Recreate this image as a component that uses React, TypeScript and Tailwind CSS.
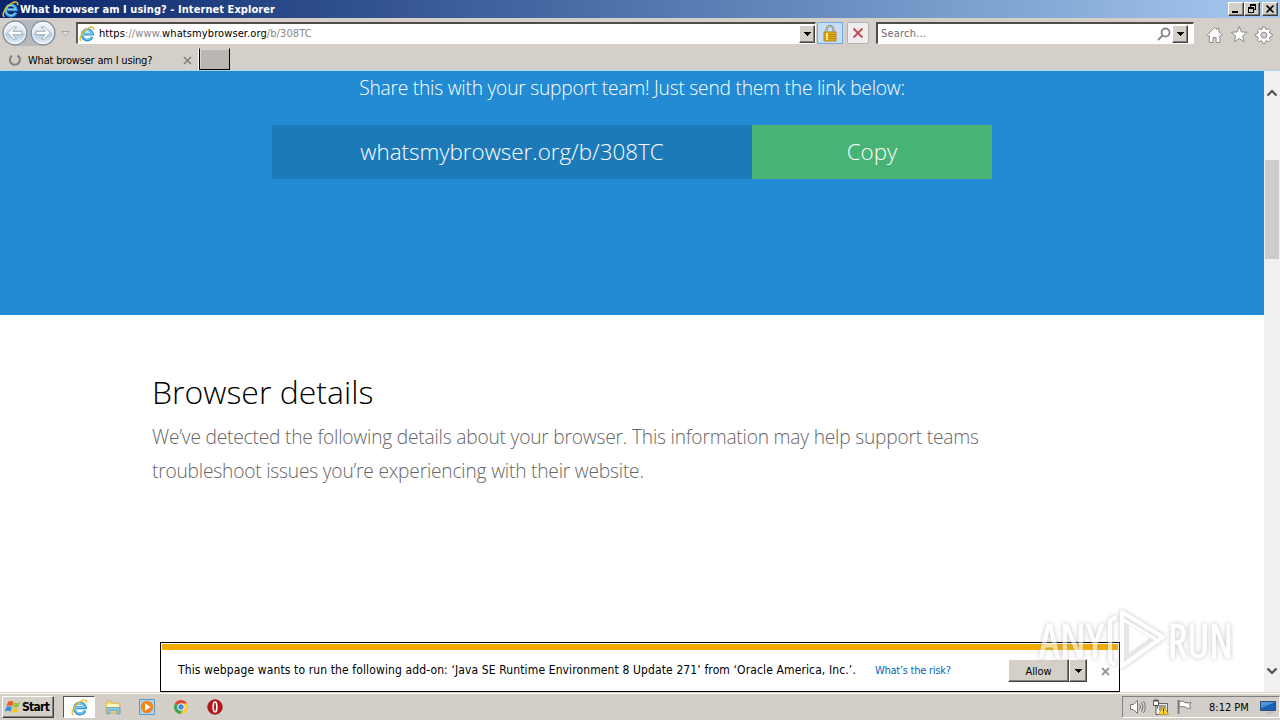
import type { ReactNode } from "react";

function IeLogo({ size = 16, className = "" }: { size?: number; className?: string }) {
  return (
    <svg width={size} height={size} viewBox="0 0 16 16" fill="none" className={`shrink-0 ${className}`}>
      <path d="M13.2 11A5.2 5.2 0 1 1 13.6 8.2H5" stroke="#2f94d2" strokeWidth="2.8" />
      <path d="M12.4 11.2A4.7 4.7 0 1 1 13 7.900H5" stroke="#7ccff3" strokeWidth="1.2" />
      <path d="M2.2 14.9C-.8 13.2 3 5.6 9 2.2c3.4-1.900 6.500-1.800 5.500 1.800" stroke="#f0bf32" strokeWidth="1.400" />
    </svg>
  );
}

function Arrow({ flip = false }: { flip?: boolean }) {
  return (
    <svg width="26" height="26" viewBox="0 0 26 26" className={flip ? "-scale-x-100" : ""}>
      <defs>
        <linearGradient id="orb" x2="0" y2="1">
          <stop stopColor="#f5f8fb" />
          <stop offset=".45" stopColor="#dce6ef" />
          <stop offset=".55" stopColor="#b5cbdc" />
          <stop offset="1" stopColor="#e8f5fc" />
        </linearGradient>
      </defs>
      <circle cx="13" cy="13" r="11.8" fill="url(#orb)" stroke="#81909e" strokeWidth="1.2" />
      <circle cx="13" cy="13" r="10.4" fill="none" stroke="#fff" opacity=".8" />
      <path d="M5.5 13l6.3-6h3l-4.2 4.3H20v3.4h-9.4l4.2 4.3h-3z" fill="#fff" stroke="#8c9eaf" strokeWidth=".8" />
    </svg>
  );
}

function Caret() {
  return (
    <svg width="8" height="4" viewBox="0 0 8 4" shapeRendering="crispEdges">
      <path d="M0 0h8L4 4z" fill="#000" />
    </svg>
  );
}

function Raised({ className, children }: { className: string; children: ReactNode }) {
  return (
    <div
      className={`flex shrink-0 items-center justify-center border border-t-white border-l-white border-r-[#404040] border-b-[#404040] bg-[#d4d0c8] shadow-[inset_-1px_-1px_0_#808080] ${className}`}
    >
      {children}
    </div>
  );
}

function TitleBar() {
  return (
    <div className="flex h-[18px] items-center bg-linear-to-r from-[#0a246a] to-[#a6caf0] pr-[2px] pl-[2px]">
      <IeLogo size={17} />
      <span className="ml-px flex-1 pt-[2px] text-[11px] font-bold tracking-[0.06px] text-white">
        What browser am I using? - Internet Explorer
      </span>
      <Raised className="h-[14px] w-4">
        <svg width="12" height="10" shapeRendering="crispEdges"><path d="M2 7h6v2H2z" /></svg>
      </Raised>
      <Raised className="h-[14px] w-4">
        <svg width="12" height="10" shapeRendering="crispEdges">
          <path d="M4 0h6v6H8V5h1V2H5v1H4zM2 3h6v6H2zM3 5v3h4V5z" fillRule="evenodd" />
        </svg>
      </Raised>
      <Raised className="ml-[2px] h-[14px] w-4">
        <svg width="12" height="10"><path d="M2.5 1.5l7 7m0-7l-7 7" stroke="#000" strokeWidth="1.7" /></svg>
      </Raised>
    </div>
  );
}

function NavBar() {
  return (
    <div className="flex h-[30px] items-start pt-[4px] pl-[2px]">
      <div className="-mt-[2px] flex h-[26px] w-[54px] shrink-0 items-center justify-between rounded-[13px] bg-[#b6b9bb]">
        <Arrow />
        <Arrow flip />
      </div>
      <svg width="9" height="6" className="mt-[9px] ml-[5px] shrink-0">
        <path d="M.5.5h8l-4 4z" fill="#e7e4df" stroke="#aaa6a2" />
      </svg>
      <div className="ml-[6px] flex h-[22px] w-[740px] shrink-0 items-center border border-t-2 border-l-2 border-t-[#504c49] border-l-[#605c58] border-r-white border-b-white bg-white pl-px">
        <IeLogo />
        <span className="ml-[4px] flex-1 pt-[2px] text-[11px] tracking-[0.1px] whitespace-nowrap text-[#878787]">
          <span className="text-black">https</span>://www.<span className="text-black">whatsmybrowser.org</span>/b/308TC
        </span>
        <Raised className="h-[18px] w-4"><Caret /></Raised>
      </div>
      <div className="ml-px flex h-[22px] w-[26px] shrink-0 items-center justify-center border border-[#76abe2] bg-[#c5def7]">
        <svg width="14" height="17" viewBox="0 0 14 17">
          <path d="M3.5 8V4.5a3.5 3.5 0 0 1 7 0V8" fill="none" stroke="#77766c" strokeWidth="2" />
          <path d="M3.5 8V4.5a3.5 3.5 0 0 1 7 0V8" fill="none" stroke="#e8dfb2" strokeWidth=".8" />
          <path d="M1 7h12v9H1z" fill="#e5ae19" stroke="#b3811a" />
          <path d="M2 9.5h10M2 11.5h10M2 13.5h10" stroke="#b98613" />
          <path d="M4 8v7" stroke="#ffe675" strokeWidth="2" />
        </svg>
      </div>
      <div className="ml-[4px] flex h-[22px] w-[22px] shrink-0 items-center justify-center rounded-[2px] border border-[#b5b0b2] bg-[#f0edef]">
        <svg width="12" height="12"><path d="M1.5 1.5l9 9M10.5 1.5l-9 9" stroke="#c35159" strokeWidth="2" /></svg>
      </div>
      <div className="ml-[7px] flex h-[22px] w-[318px] shrink-0 items-center border border-t-2 border-l-2 border-t-[#504c49] border-l-[#504c49] border-r-white border-b-white bg-white">
        <span className="ml-[3px] flex-1 pt-[2px] text-[11px] tracking-[0.2px] text-[#6d6d6d]">Search...</span>
        <svg width="14" height="14" fill="none" stroke="#888" strokeWidth="1.8">
          <circle cx="8.5" cy="5.5" r="4" />
          <path d="M5.5 8.5L1 13" />
        </svg>
        <Raised className="mr-[5px] ml-px h-[18px] w-4"><Caret /></Raised>
      </div>
      <svg width="70" height="20" className="mt-[3px] ml-[12px] shrink-0" fill="#fff" stroke="#8c8c8c" strokeWidth="1">
        <path d="M1 10.3L8.5 2.5l2.2 2.2V3.2h2.2v3.7l3.4 3.4-1.2 1.2-1.2-1V17.5h-3.8v-5H7v5H3.3v-7l-1.1 1z" />
        <path d="M33.2 1.5l2.2 5.4 5.8.4-4.5 3.7 1.5 5.7-5-3.1-5 3.1 1.5-5.7-4.5-3.7 5.8-.4z" />
        <path d="M56.6 2h2.6l.4 2.1 1.4.6 1.8-1.2 1.8 1.8-1.2 1.8.6 1.4 2.1.4v2.6l-2.1.4-.6 1.4 1.2 1.8-1.8 1.8-1.8-1.2-1.4.6-.4 2.1h-2.6l-.4-2.1-1.4-.6-1.8 1.2-1.8-1.8 1.2-1.8-.6-1.4-2.1-.4V8.9l2.1-.4.6-1.4-1.2-1.8L53 3.5l1.8 1.2 1.4-.6z" />
        <circle cx="57.9" cy="10.2" r="3" fill="#d4d0cb" />
      </svg>
    </div>
  );
}

function TabBar() {
  return (
    <div className="flex h-[23px] items-start border-b border-[#a9d5e7]">
      <div className="flex h-[22px] w-[199px] items-center border-r border-white pt-[2px] pl-[8px]">
        <svg width="14" height="14" fill="none" stroke="#858585" strokeWidth="2.2">
          <path d="M9.5 2.5A5 5 0 1 1 4 2.7" />
        </svg>
        <span className="ml-[6px] flex-1 pt-[2px] text-[11px] tracking-[-0.19px]">What browser am I using?</span>
        <svg width="9" height="9" className="mr-[6px]"><path d="M1 1l7 7M8 1L1 8" stroke="#85817d" strokeWidth="1.7" /></svg>
      </div>
      <div className="h-[22px] w-[31px] border border-t-[#d4d0cb] border-l-black border-r-black border-b-black bg-[#bcb6b3] shadow-[inset_1px_1px_0_#d8d4d0]" />
    </div>
  );
}

function ScrollBar() {
  return (
    <div className="flex w-4 flex-col items-center justify-between bg-[#f0f0f0] pt-[17px] pb-[16px]">
      <svg width="12" height="9" className="h-[9px] shrink-0"><path d="M1.5 7.5L6 3l4.5 4.5" fill="none" stroke="#505050" strokeWidth="2.2" /></svg>
      <div className="mt-[63px] mb-auto h-[99px] w-[14px] bg-[#cdcdcd]" />
      <svg width="12" height="9" className="shrink-0"><path d="M1.5 1.5L6 6l4.5-4.5" fill="none" stroke="#505050" strokeWidth="2.2" /></svg>
    </div>
  );
}

function Page() {
  return (
    <main className="flex-1 bg-white font-['Open_Sans',sans-serif] font-light [font-stretch:normal]">
      <section className="flex h-[244px] flex-col items-center bg-[#228bd4] text-white">
        <p className="h-[34px] text-[19.2px] leading-[34px] tracking-[-0.22px] whitespace-nowrap">
          Share this with your support team! Just send them the link below:
        </p>
        <div className="mt-[20px] flex h-[54px] text-[22.4px] leading-[54px]">
          <div className="w-[480px] bg-[#1d7ab9] text-center">whatsmybrowser.org/b/308TC</div>
          <div className="w-[240px] bg-[#47b475] text-center">Copy</div>
        </div>
      </section>
      <section className="px-[152px] pt-[54px]">
        <h1 className="text-[32px] leading-[46px] text-black">Browser details</h1>
        <p className="mt-[5px] w-[900px] text-[19.2px] leading-[34px] tracking-[-0.21px] text-[#666]">
          We’ve detected the following details about your browser. This information may help support teams
          <br />
          troubleshoot issues you’re experiencing with their website.
        </p>
      </section>
    </main>
  );
}

function AddonPrompt() {
  return (
    <div className="absolute top-[642px] left-[160px] h-[50px] w-[960px] border border-black bg-white p-px">
      <div className="h-[6px] bg-[#f4ab00]" />
      <div className="flex h-[38px] items-center pl-4 text-[12px]">
        <span className="w-[697px] pt-[2px] tracking-[0.12px] whitespace-nowrap">
          This webpage wants to run the following add-on: ‘Java SE Runtime Environment 8 Update 271’ from ‘Oracle America, Inc.’.
        </span>
        <span className="w-[133px] pt-[4px] text-[11px] tracking-[-0.26px] text-[#0066bf]">What’s the risk?</span>
        <Raised className="mt-[3px] h-[23px] w-[61px] pt-[3px] text-[11px] tracking-[-0.1px]">Allow</Raised>
        <Raised className="mt-[3px] h-[23px] w-[18px]"><Caret /></Raised>
        <svg width="9" height="9" className="mt-[4px] ml-[14px]"><path d="M1 1l7 7M8 1L1 8" stroke="#999" strokeWidth="1.9" /></svg>
      </div>
    </div>
  );
}

function Watermark() {
  return (
    <svg
      width="210"
      height="80"
      className="absolute top-[600px] left-[1030px] [filter:drop-shadow(0_0_2px_#999)]"
      fontFamily="'Open Sans', sans-serif"
      opacity=".6"
    >
      <g fill="#fff" stroke="#fff" strokeWidth=".8" fontSize="47">
        <text x="9" y="58" textLength="65" lengthAdjust="spacingAndGlyphs">ANY</text>
        <text x="138" y="58" textLength="65" lengthAdjust="spacingAndGlyphs">RUN</text>
      </g>
      <g fill="none" stroke="#fff" strokeLinejoin="round">
        <path d="M92 12v54l41-29z" fill="#eee" fillOpacity=".6" strokeWidth="4" />
        <path d="M86 17l-6 4v40l5 4" strokeWidth="4" />
        <path d="M100 27v24l18-13z" fill="#fff" strokeWidth="2" />
        <path d="M92 19l35 21" strokeWidth="3" />
      </g>
    </svg>
  );
}

function WindowsFlag() {
  return (
    <svg width="17" height="16" viewBox="0 0 17 16">
      <path d="M3 3q3-2 5.5 0L7.2 7.5Q4.500 5.500 1.500 7.200z" fill="#eb5b25" />
      <path d="M9.300 3.500Q12 5 15 3L13.500 7.500Q11 9.200 8 7.800z" fill="#8cc43c" />
      <path d="M1.300 8Q4 6.500 7 8.300L5.600 12.700Q3 11-.1 12.500z" fill="#3b91dc" />
      <path d="M7.800 8.700Q10.500 10.200 13.300 8.400L12 12.800Q9 14.600 6.400 13z" fill="#f7c42a" />
    </svg>
  );
}

function TaskBar() {
  return (
    <footer className="flex h-[28px] items-center border-t border-[#d4d0c8] bg-[#d4cec9] pt-px pl-[2px] shadow-[inset_0_1px_0_#fff]">
      <Raised className="h-[22px] w-[52px] pr-[2px] text-[12px] font-bold tracking-[-0.7px]">
        <WindowsFlag />
        <span>Start</span>
      </Raised>
      <div className="ml-[9px] flex h-[22px] w-[32px] items-center justify-center border border-t-[#555] border-l-[#555] border-r-white border-b-white bg-white">
        <IeLogo size={17} />
      </div>
      <svg width="18" height="18" className="ml-[9px]">
        <path d="M2 3h5l1 2h8v10H2z" fill="#efd579" stroke="#d2ae4d" strokeWidth=".7" />
        <path d="M3 6h12v3H3z" fill="#fcf4bb" />
        <path d="M3 16V9.500h13V16h-3v-3.500H6V16z" fill="#83c6df" stroke="#619cba" strokeWidth=".7" />
      </svg>
      <svg width="18" height="18" className="ml-[16px]">
        <path d="M1.500 1.500h15v15h-15z" fill="#a9d8f5" stroke="#5e9ac9" />
        <circle cx="9" cy="9" r="6.200" fill="#f58619" />
        <path d="M7 5.300L12.700 9 7 12.700z" fill="#fff" />
      </svg>
      <svg width="16" height="16" viewBox="0 0 16 16" className="ml-[17px]">
        <circle cx="8" cy="8" r="7" fill="#f7ce35" />
        <path d="M8 8L1.900 4.500A7 7 0 0 1 14.100 4.600H8z" fill="#dc4638" />
        <path d="M1.900 4.500A7 7 0 0 0 7.500 15L10.500 9.500 8 8z" fill="#3ba457" />
        <circle cx="8" cy="8" r="3.300" fill="#4286d5" stroke="#fff" />
      </svg>
      <svg width="16" height="16" className="ml-[18px]">
        <circle cx="8" cy="8" r="7.300" fill="#bc1519" stroke="#8b1115" strokeWidth=".7" />
        <ellipse cx="8" cy="8" rx="1.800" ry="5" fill="#a81217" stroke="#fff" strokeWidth="1.700" />
      </svg>
      <div className="ml-auto flex h-[22px] w-[158px] items-center border border-t-[#808080] border-l-[#808080] border-r-white border-b-white pl-[6px]">
        <svg width="17" height="16" fill="none" stroke="#777">
          <path d="M1.500 5.500h3l4-4v13l-4-4h-3z" fill="#fff" />
          <path d="M10.500 5.500q2 2.500 0 5M12.500 3.500q3 4.500 0 9M14.500 2q3.500 6 0 12" />
        </svg>
        <svg width="17" height="17" className="ml-[6px]">
          <path d="M5.500 4.500h10v9h-10z" fill="#e8e8e8" stroke="#666" />
          <path d="M7 6h7v6H7z" fill="#9b9b9b" />
          <path d="M1.500 1.500h5v5h-5zM4 7v8.500h5M3 0v3m2-3v3" fill="#fff" stroke="#555" />
          <path d="M11.500 7l5 8.500h-10z" fill="#ffd52c" stroke="#b68c1c" strokeWidth=".7" />
          <path d="M11.500 9.500v3m0 1v1" stroke="#222" />
        </svg>
        <svg width="17" height="16" className="ml-[7px]">
          <path d="M3 2.500q4-1.500 6 1 3 1 6 0l-1.500 3L15 9q-3 1.500-6-1-2-1-6 0z" fill="#fff" stroke="#777" />
          <path d="M2.500 1v14" stroke="#777" strokeWidth="1.800" />
        </svg>
        <span className="ml-[16px] pt-[2px] text-[11px] whitespace-nowrap">8:12 PM</span>
        <svg width="16" height="16" className="ml-auto mr-[3px]">
          <path d="M.5 2.500h15v9H.5z" fill="#1761b8" stroke="#304c71" />
          <path d="M1 3h14L1 9z" fill="#4d95db" />
          <path d="M4 14l8-2 3 1.500-7 1.500z" fill="#b5c0c9" />
        </svg>
      </div>
    </footer>
  );
}

export default function App() {
  return (
    <div className="relative flex h-[720px] w-[1280px] flex-col overflow-hidden bg-[#d5cfc9] font-['DejaVu_Sans_Condensed','DejaVu_Sans',sans-serif] text-black [font-stretch:condensed]">
      <TitleBar />
      <NavBar />
      <TabBar />
      <div className="flex h-[621px]">
        <Page />
        <ScrollBar />
      </div>
      <TaskBar />
      <AddonPrompt />
      <Watermark />
    </div>
  );
}
